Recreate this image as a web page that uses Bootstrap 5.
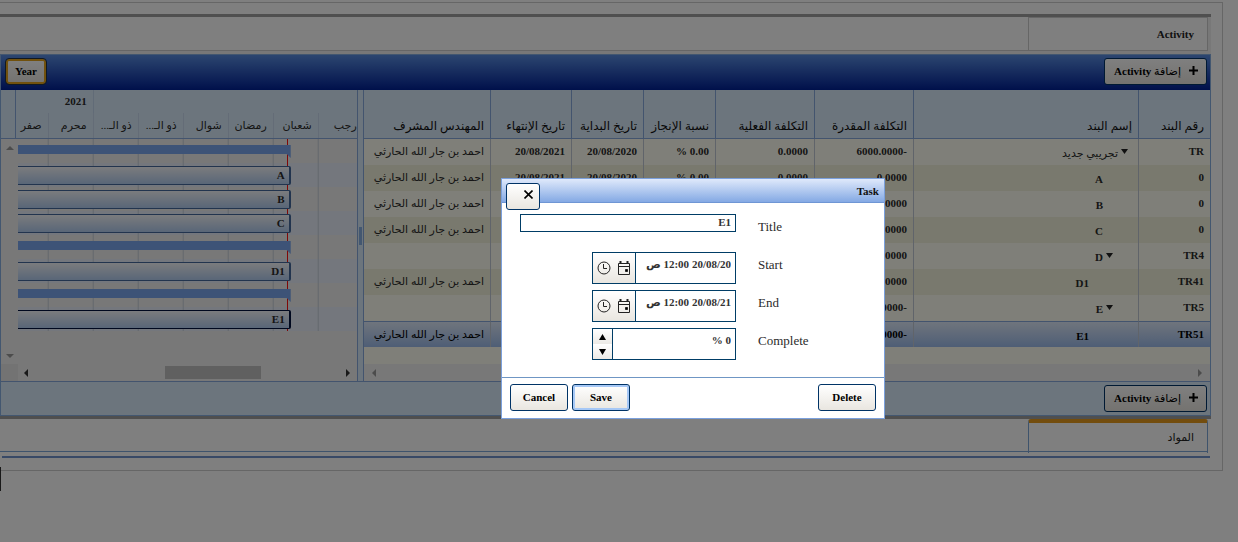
<!DOCTYPE html>
<html lang="ar" dir="rtl">
<head>
<meta charset="utf-8">
<meta name="viewport" content="width=device-width, initial-scale=1">
<title>Activity</title>
<link href="https://cdn.jsdelivr.net/npm/bootstrap@5.3.0/dist/css/bootstrap.min.css" rel="stylesheet">
<style>
  body { font: 11px/16px "Liberation Serif", "DejaVu Sans", serif; color: #2b2b2b; background: #fff; overflow: hidden; padding-top: 2px; }
  svg { display: block; }
  .page-frame { margin-right: 15px; border: 1px solid #ccc; border-left: 0; padding: 11px 11px 12px 0; }
  .panel-box { border-top: 3px solid #9e9e9e; border-bottom: 3px solid #9e9e9e; background: #f0f0f0; }
  .tab-strip { height: 34px; margin-right: 3px; border-bottom: 1px solid #ccc; background: #fff; }
  .tab-strip a { width: 180px; padding: 0 13px 0 0; color: #222; font-weight: bold; text-decoration: none; border: solid #ccc; border-width: 1px 1px 0; }
  .tab-strip.second { height: 33px; border-color: #7da7d8; }
  .tab-strip.second a { border: solid #7da7d8; border-width: 4px 1px 0; border-top-color: #e69a1c; border-radius: 3px 3px 0 0; font-weight: normal; height: 34px; padding-bottom: 2px; }
  .ar { font-weight: normal; font-size: 11px; }
  .gantt { margin-top: 3px; border: 1px solid #86aee0; }
  .tool-head { height: 35px; padding: 3px 3px 0; background: linear-gradient(#588ce0, #002096); }
  .tool-foot { height: 34px; padding: 3px; background: #d9eafa; border-top: 1px solid #86a8dc; }
  .btn-face { height: 27px; padding: 0 8px 2px 9px; font: bold 11px/16px "Liberation Serif", "DejaVu Sans", serif; color: #000; border: 1px solid #003366; border-radius: 3px; background: linear-gradient(#fff, #e9e6e0); }
  .btn-face:hover { color: #000; border-color: #003366; }
  .btn-year { margin-left: 2px; padding: 0 7px 1px; height: 25px; margin-top: 1px; border: 2px solid #e3a21a; outline: 1px solid #234; }
  .list-pane { flex: 0 0 70%; background: #fffff2; }
  .list-pane table { table-layout: fixed; width: 100%; border-collapse: separate; border-spacing: 0; white-space: nowrap; }
  .list-pane th { height: 49px; padding: 0 6px 4px; vertical-align: bottom; font-weight: normal; font-size: 12px; color: #111; text-align: right; background: #d9eafa; border-bottom: 1px solid #86a8dc; border-left: 1px solid #86a8dc; overflow: hidden; }
  .list-pane td { height: 26px; padding: 0 6px 2px; font-weight: bold; text-align: right; border-left: 1px solid #c0c8d4; overflow: hidden; }
  .list-pane th:last-child, .list-pane td:last-child { border-left: 0; }
  .list-pane td:last-child { font-weight: normal; }
  .list-pane tbody tr:nth-child(even) { background: #f3f3dc; }
  .list-pane tbody tr.picked { background: linear-gradient(#e2ecfb, #9dbcec); color: #000; }
  .list-pane tr.picked td { border-top: 1px solid #86a8dc; }
  .list-pane td.lvl0, .list-pane td.lvl1, .list-pane td.lvl2 { padding-top: 2px; padding-bottom: 0; }
  .list-pane td.lvl0 { padding-right: 10px; }
  .list-pane td.lvl1 { padding-right: 25px; }
  .list-pane td.lvl2 { padding-right: 39px; }
  .list-pane .c-no { width: 72px; }
  .list-pane .c-name { width: 225px; }
  .list-pane .c-cost { width: 99px; }
  .list-pane .c-end { width: 81px; }
  .tree-mark { width: 7px; margin-left: 3px; margin-bottom: 6px; }
  .hscroll { height: 17px; background: #f1f1f1; }
  .splitter { flex: 0 0 7px; background: #d9eafa; border: solid #86a8dc; border-width: 0 1px; }
  .splitter span { width: 3px; height: 18px; background: #86aee0; }
  .chart-pane { min-width: 0; }
  .chart-head { height: 49px; background: #d9eafa; border-bottom: 1px solid #86a8dc; }
  .chart-head .gutter { width: 15px; border-right: 1px solid #86a8dc; }
  .year-row { height: 23px; }
  .year-row div { padding: 3px 6px 0 0; font-weight: bold; }
  .year-old { flex: 0 0 264px; border-left: 1px solid #c3d6ee; }
  .month { flex: 0 0 45px; padding: 4px 6px 0 0; border-left: 1px solid #c8d9ee; }
  .month.cut { flex-basis: 39px; padding-right: 0; }
  .month.rest { flex: 1 1 0; border: 0; }
  .vscroll { width: 17px; background: #f1f1f1; padding: 7px 0 6px; }
  .lane { height: 24px; background: linear-gradient(to left, transparent 44px, #c6cfda 44px) right -6px top 0 / 45px 100% repeat-x; }
  .lane.alt { background-color: #e9effb; }
  .slot { height: 24px; padding: 3px 66px 0 0; }
  .chart-tail { height: 33px; }
  .now-line { right: 69px; top: 0; bottom: 0; width: 1px; background: #ff1010; }
  .task-bar { height: 19px; padding: 0 4px 0 0; line-height: 16px; font-weight: bold; border: solid #44699c; border-width: 1px 2px 1px 0; border-radius: 0 2px 2px 0; background: linear-gradient(#f6f8fc, #b3cdf0); }
  .task-bar.picked { border-color: #00103c; }
  .group-bar { margin-top: 3px; height: 13px; background: #7aa6ee; clip-path: polygon(0 0, 100% 0, 100% 100%, calc(100% - 4px) 9px, 0 9px); }
  .thumb { margin-right: 84px; width: 96px; height: 13px; background: #c1c1c1; }
  .scroll-left { margin-right: auto; margin-left: 6px; }
  .corner { width: 17px; height: 17px; background: #e6e6e6; }
  .base-rule { height: 2px; margin: 4px 1px 0 2px; background: #7092cc; }
  .edge-mark { position: absolute; left: 0; top: 467px; width: 1px; height: 24px; background: #333; }
  .veil { position: fixed; inset: 0; background: rgba(0, 0, 0, .5); }
  .task-dialog { position: absolute; left: 501px; top: 178px; width: 384px; background: #fff; border: 1px solid #7ba0dc; }
  .dlg-head { height: 24px; padding: 4px 5px 0 4px; background: linear-gradient(#dfe9fb, #84a9e4); border-bottom: 1px solid #6f96d4; font-weight: bold; color: #111; }
  .btn-x { width: 34px; height: 27px; padding: 6px 6px 0; align-self: flex-start; }
  .dlg-body { height: 174px; padding: 11px 0 0 18px; }
  .dlg-row { height: 38px; }
  .dlg-row label { width: 126px; margin-left: 22px; padding-top: 5px; font-size: 13px; text-align: left; }
  .dlg-row input { min-width: 0; padding: 0 4px; border: 0; background: #fff; font: bold 11px/16px "Liberation Serif", "DejaVu Sans", serif; color: #333; outline: 0; }
  .boxed { border: 1px solid #003d66; height: 32px; width: 144px; }
  .dlg-row .boxed input { padding-bottom: 8px; }
  .dlg-row input.boxed-line { border: 1px solid #003d66; height: 18px; width: 216px; padding-bottom: 2px; }
  .pick { flex: 0 0 43px; padding: 0 4px; border-right: 1px solid #003d66; background: linear-gradient(#fff, #e9e6e0); }
  .pick button, .spin button { padding: 0; border: 0; background: none; }
  .spin { flex: 0 0 20px; border-right: 1px solid #003d66; background: linear-gradient(#fff, #eceae6 50%, #fff 50%, #eceae6); }
  .dlg-foot { height: 41px; padding: 6px 8px; border-top: 1px solid #6f96c4; }
  .btn-save { margin-right: auto; box-shadow: inset 0 0 0 2px #a6c8f6; }
  .dlg-foot .btn-face { width: 58px; padding: 0 0 2px; }
</style>
</head>
<body>
<main class="page-frame">
  <section class="panel-box">
    <nav class="tab-strip d-flex"><a href="#activity" class="d-flex align-items-center">Activity</a></nav>
    <div class="gantt">
      <div class="tool-head d-flex justify-content-between">
        <button type="button" class="btn btn-face d-flex align-items-center gap-2"><svg width="9" height="9"><path d="M4.500 0v9M0 4.500h9" stroke="#000" stroke-width="2"/></svg><span><span class="ar">إضافة</span> Activity</span></button>
        <button type="button" class="btn btn-face btn-year">Year</button>
      </div>
      <div class="d-flex">
        <div class="list-pane d-flex flex-column">
          <table>
            <colgroup><col class="c-no"><col class="c-name"><col class="c-cost"><col class="c-cost"><col class="c-no"><col class="c-no"><col class="c-end"><col></colgroup>
            <thead><tr><th>رقم البند</th><th>إسم البند</th><th>التكلفة المقدرة</th><th>التكلفة الفعلية</th><th>نسبة الإنجاز</th><th>تاريخ البداية</th><th>تاريخ الإنتهاء</th><th>المهندس المشرف</th></tr></thead>
            <tbody>
              <tr><td>TR</td><td class="lvl0"><svg class="tree-mark d-inline-block" height="5"><path d="M0 0h7L3.500 5z" fill="#222"/></svg><span class="ar">تجريبي جديد</span></td><td>-6000.0000</td><td>0.0000</td><td>0.00 %</td><td>20/08/2020</td><td>20/08/2021</td><td>احمد بن جار الله الحارثي</td></tr>
              <tr><td>0</td><td class="lvl1"><span class="tree-mark d-inline-block"></span>A</td><td>0.0000</td><td>0.0000</td><td>0.00 %</td><td>20/08/2020</td><td>20/08/2021</td><td>احمد بن جار الله الحارثي</td></tr>
              <tr><td>0</td><td class="lvl1"><span class="tree-mark d-inline-block"></span>B</td><td>0.0000</td><td></td><td></td><td></td><td></td><td>احمد بن جار الله الحارثي</td></tr>
              <tr><td>0</td><td class="lvl1"><span class="tree-mark d-inline-block"></span>C</td><td>0.0000</td><td></td><td></td><td></td><td></td><td>احمد بن جار الله الحارثي</td></tr>
              <tr><td>TR4</td><td class="lvl1"><svg class="tree-mark d-inline-block" height="5"><path d="M0 0h7L3.500 5z" fill="#222"/></svg>D</td><td>0.0000</td><td></td><td></td><td></td><td></td><td></td></tr>
              <tr><td>TR41</td><td class="lvl2"><span class="tree-mark d-inline-block"></span>D1</td><td>0.0000</td><td></td><td></td><td></td><td></td><td>احمد بن جار الله الحارثي</td></tr>
              <tr><td>TR5</td><td class="lvl1"><svg class="tree-mark d-inline-block" height="5"><path d="M0 0h7L3.500 5z" fill="#222"/></svg>E</td><td>-6000.0000</td><td></td><td></td><td></td><td></td><td></td></tr>
              <tr class="picked"><td>TR51</td><td class="lvl2"><span class="tree-mark d-inline-block"></span>E1</td><td>-6000.0000</td><td></td><td></td><td></td><td></td><td>احمد بن جار الله الحارثي</td></tr>
            </tbody>
          </table>
          <div class="hscroll mt-auto px-2 d-flex justify-content-between align-items-center">
            <svg width="4" height="8"><path d="M0 0v8l4-4z" fill="#999"/></svg>
            <svg width="4" height="8"><path d="M4 0v8L0 4z" fill="#999"/></svg>
          </div>
        </div>
        <div class="splitter d-flex align-items-center justify-content-center"><span></span></div>
        <div class="chart-pane flex-grow-1">
          <div class="chart-head d-flex">
            <div class="flex-grow-1 overflow-hidden">
              <div class="year-row d-flex"><div class="year-old"></div><div class="flex-grow-1">2021</div></div>
              <div class="d-flex h-100 text-nowrap">
                <div class="month cut">رجب</div><div class="month">شعبان</div><div class="month">رمضان</div><div class="month">شوال</div><div class="month">ذو الـ...</div><div class="month">ذو الـ...</div><div class="month">محرم</div><div class="month rest">صفر</div>
              </div>
            </div>
            <div class="gutter"></div>
          </div>
          <div class="d-flex">
            <div class="flex-grow-1">
              <div class="position-relative">
                <div class="lane"></div><div class="lane alt"></div><div class="lane"></div><div class="lane alt"></div><div class="lane"></div><div class="lane alt"></div><div class="lane"></div><div class="lane alt"></div>
                <div class="now-line position-absolute"></div>
                <div class="position-absolute top-0 start-0 w-100">
                  <div class="slot d-flow-root"><div class="group-bar"></div></div>
                  <div class="slot"><div class="task-bar">A</div></div>
                  <div class="slot"><div class="task-bar">B</div></div>
                  <div class="slot"><div class="task-bar">C</div></div>
                  <div class="slot"><div class="group-bar"></div></div>
                  <div class="slot"><div class="task-bar">D1</div></div>
                  <div class="slot"><div class="group-bar"></div></div>
                  <div class="slot"><div class="task-bar picked">E1</div></div>
                </div>
              </div>
              <div class="chart-tail"></div>
            </div>
            <div class="vscroll d-flex flex-column justify-content-between align-items-center">
              <svg width="8" height="4"><path d="M0 4h8L4 0z" fill="#999"/></svg>
              <svg width="8" height="4"><path d="M0 0h8L4 4z" fill="#999"/></svg>
            </div>
          </div>
          <div class="hscroll d-flex align-items-center">
            <svg width="12" height="8"><path d="M1 0v8l4-4z" fill="#333"/></svg>
            <div class="thumb"></div>
            <svg class="scroll-left" width="4" height="8"><path d="M4 0v8L0 4z" fill="#333"/></svg>
            <span class="corner"></span>
          </div>
        </div>
      </div>
      <div class="tool-foot d-flex">
        <button type="button" class="btn btn-face d-flex align-items-center gap-2"><svg width="9" height="9"><path d="M4.500 0v9M0 4.500h9" stroke="#000" stroke-width="2"/></svg><span><span class="ar">إضافة</span> Activity</span></button>
      </div>
    </div>
  </section>
  <nav class="tab-strip second d-flex"><a href="#materials" class="d-flex align-items-center">المواد</a></nav>
  <div class="base-rule"></div>
</main>
<div class="edge-mark"></div>
<div class="veil"></div>
<form class="task-dialog" role="dialog" aria-label="Task">
  <div class="dlg-head d-flex justify-content-between">
    <span>Task</span>
    <button type="button" class="btn btn-face btn-x d-flex" aria-label="Close"><svg width="9" height="9"><path d="M.5 .5l8 8M8.500 .5l-8 8" stroke="#000" stroke-width="1.600"/></svg></button>
  </div>
  <div class="dlg-body">
    <div class="dlg-row d-flex"><label for="t">Title</label><input id="t" class="boxed-line" value="E1"></div>
    <div class="dlg-row d-flex"><label for="s">Start</label>
      <div class="boxed d-flex"><input id="s" class="flex-grow-1" value="20/08/20 12:00 ص"><span class="pick d-flex align-items-center justify-content-between">
        <button type="button" aria-label="Start date"><svg width="14" height="14" fill="none" stroke="#222"><path d="M1.500 2.500h11v11h-11zM1 5.500h12"/><path d="M3.500 0v3M10.500 0v3" stroke-width="2"/><path d="M8.500 8.500h2v2h-2z" fill="#000"/></svg></button>
        <button type="button" aria-label="Start time"><svg width="14" height="14" fill="none" stroke="#222"><circle cx="7" cy="7" r="6"/><path d="M6.500 3v4.500H10"/></svg></button></span></div></div>
    <div class="dlg-row d-flex"><label for="e">End</label>
      <div class="boxed d-flex"><input id="e" class="flex-grow-1" value="20/08/21 12:00 ص"><span class="pick d-flex align-items-center justify-content-between">
        <button type="button" aria-label="End date"><svg width="14" height="14" fill="none" stroke="#222"><path d="M1.500 2.500h11v11h-11zM1 5.500h12"/><path d="M3.500 0v3M10.500 0v3" stroke-width="2"/><path d="M8.500 8.500h2v2h-2z" fill="#000"/></svg></button>
        <button type="button" aria-label="End time"><svg width="14" height="14" fill="none" stroke="#222"><circle cx="7" cy="7" r="6"/><path d="M6.500 3v4.500H10"/></svg></button></span></div></div>
    <div class="dlg-row d-flex"><label for="c">Complete</label>
      <div class="boxed d-flex"><input id="c" class="flex-grow-1" value="0 %"><span class="spin d-flex flex-column align-items-center justify-content-around">
        <button type="button" aria-label="Increase"><svg width="7" height="6"><path d="M0 6h7L3.500 0z"/></svg></button>
        <button type="button" aria-label="Decrease"><svg width="7" height="6"><path d="M0 0h7L3.500 6z"/></svg></button></span></div></div>
  </div>
  <div class="dlg-foot d-flex gap-1">
    <button type="button" class="btn btn-face">Delete</button>
    <button type="submit" class="btn btn-face btn-save">Save</button>
    <button type="button" class="btn btn-face">Cancel</button>
  </div>
</form>
<script src="https://cdn.jsdelivr.net/npm/bootstrap@5.3.0/dist/js/bootstrap.bundle.min.js"></script>
</body>
</html>
